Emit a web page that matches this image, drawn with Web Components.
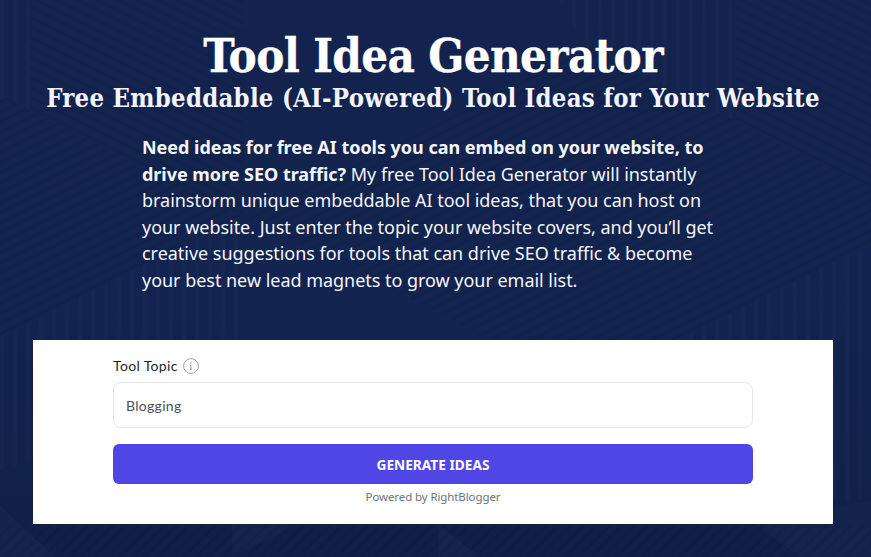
<!doctype html>
<html><head><meta charset="utf-8"><title>Tool Idea Generator</title>
<style>
html,body{margin:0;height:100%;overflow:hidden;background:#12224f}
</style></head><body>
<tool-page>
  <span slot="title">Tool Idea Generator</span>
  <span slot="subtitle">Free Embeddable (AI-Powered) Tool Ideas for Your Website</span>
  <b slot="intro-lead">Need ideas for free AI tools you can embed on your website, to drive more SEO traffic?</b>
  <span slot="intro">My free Tool Idea Generator will instantly brainstorm unique embeddable AI tool ideas, that you can host on your website. Just enter the topic your website covers, and you’ll get creative suggestions for tools that can drive SEO traffic &amp; become your best new lead magnets to grow your email list.</span>
  <idea-form slot="form"></idea-form>
</tool-page>
<script>
function def(name,html){customElements.define(name,class extends HTMLElement{constructor(){super();this.attachShadow({mode:'open'}).innerHTML=html}})}
def('page-backdrop',`<style>:host{position:absolute;inset:0;display:block;z-index:0}svg{display:block;width:871px;height:557px}</style>
<svg viewBox="0 0 871 557" preserveAspectRatio="none" aria-hidden="true"><defs>
<linearGradient id="g" x1="0" y1="0" x2="0" y2="1"><stop offset="0" stop-color="#13234e"/><stop offset=".55" stop-color="#12244f"/><stop offset="1" stop-color="#102048"/></linearGradient>
<pattern id="up" width="9" height="9" patternUnits="userSpaceOnUse" patternTransform="rotate(-26.57)"><rect width="9" height="3" fill="#000" fill-opacity=".05"/></pattern>
<pattern id="down" width="9" height="9" patternUnits="userSpaceOnUse" patternTransform="rotate(26.57)"><rect width="9" height="3" fill="#000" fill-opacity=".05"/></pattern>
<pattern id="vert" width="13" height="13" patternUnits="userSpaceOnUse"><rect width="4" height="13" fill="#fff" fill-opacity=".014"/></pattern>
<pattern id="d45" width="9" height="9" patternUnits="userSpaceOnUse" patternTransform="rotate(-45)"><rect width="9" height="3" fill="#000" fill-opacity=".07"/></pattern>
</defs>
<rect width="871" height="557" fill="url(#g)"/>
<polygon points="-439,216 -98,46 243,216 -98,386" fill="url(#up)"/>
<polygon points="243,216 585,46 926,216 585,386" fill="url(#up)"/>
<polygon points="926,216 585,386 585,500 926,500" fill="url(#vert)"/>
<polygon points="-98,386 243,216 243,400 -98,500" fill="url(#vert)"/>
<polygon points="560,0 735,0 735,121 585,46" fill="url(#vert)"/>
<polygon points="0,0 30,0 30,110 0,95" fill="url(#vert)"/>
<polygon points="735,0 926,0 926,216 735,121" fill="url(#down)"/>
<polygon points="30,0 243,0 243,216 30,110" fill="url(#down)"/>
<polygon points="0,524 871,524 871,557 0,557" fill="url(#d45)"/>
<polygon points="0,505 20,525 55,557 0,557" fill="#fff" fill-opacity=".02"/>
<polygon points="232,524 300,524 232,557" fill="#fff" fill-opacity=".014"/>
<polygon points="438,524 480,557 438,557" fill="#fff" fill-opacity=".02"/>
<polygon points="755,524 800,557 871,557 871,500" fill="#fff" fill-opacity=".014"/>
</svg>`);
def('tool-page',`<style>
:host{display:block;position:relative;box-sizing:border-box;height:557px;width:871px;padding:31px 5px 0 0;overflow:hidden;background:#12244f;color:#fff}
.wrap{position:relative;z-index:1;display:flex;flex-direction:column;align-items:center}
h1{margin:0 0 2px;font:700 47px/50px "DejaVu Serif",serif;font-stretch:condensed;letter-spacing:-.65px;color:#fff;-webkit-text-stroke:.3px #fff}
h2{margin:0;font:700 25.5px/30px "DejaVu Serif",serif;font-stretch:condensed;letter-spacing:.25px;color:#f2f4fa;white-space:nowrap}
p{box-sizing:border-box;width:582px;margin:21px 0 0;font:400 18px/26.6px "Noto Sans",sans-serif;letter-spacing:-.03px;color:#f4f6fb}
.form{margin-top:46.6px;width:800px}
</style><page-backdrop></page-backdrop><div class="wrap"><h1><slot name="title"></slot></h1><h2><slot name="subtitle"></slot></h2>
<p><slot name="intro-lead"></slot> <slot name="intro"></slot></p>
<div class="form"><slot name="form"></slot></div></div>`);
def('info-icon',`<style>:host{display:inline-flex;width:16px;height:16px}svg{width:16px;height:16px}</style>
<svg viewBox="0 0 16 16" fill="none" stroke="#a0a2ac" stroke-width="1"><circle cx="8" cy="8" r="7.4"/><path d="M7.2 7.4H8V11.4M7 11.4H9" stroke="#9a9ca6"/><circle cx="8" cy="5" r=".7" fill="#9a9ca6" stroke="none"/></svg>`);
def('idea-form',`<style>
:host{display:block;box-sizing:border-box;background:#fff;height:184px;padding:17px 80px 0;font-family:Lato,sans-serif}
label{display:flex;align-items:center;gap:5px;font:400 14px/18px Lato,sans-serif;color:#1c1f2e;letter-spacing:.35px}
input{display:block;box-sizing:border-box;width:100%;height:46px;margin-top:7px;border:1px solid #e4e6ea;border-radius:8px;padding:0 12px;font:400 14px Lato,sans-serif;color:#4b4e5a;background:#fff;outline:0;letter-spacing:.3px}
button{display:block;width:100%;height:40px;margin-top:16px;border:0;border-radius:6px;background:#4f46e5;color:#fff;font:700 13.7px "Noto Sans",sans-serif}
.pw{margin-top:6px;text-align:center;font:400 11.5px/14px "Noto Sans",sans-serif;letter-spacing:-.1px;color:#6b7280}
</style><label>Tool Topic <info-icon></info-icon></label>
<input value="Blogging" aria-label="Tool Topic"><button>GENERATE IDEAS</button><div class="pw">Powered by RightBlogger</div>`);
</script></body></html>
